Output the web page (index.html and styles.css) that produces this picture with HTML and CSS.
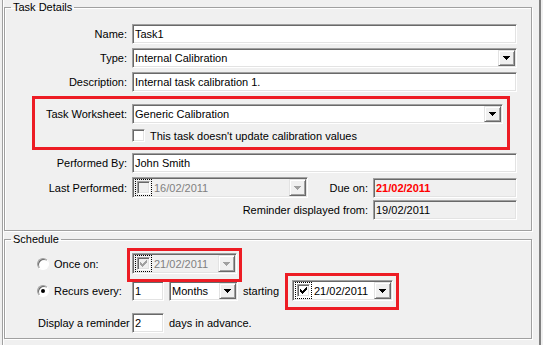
FILE: index.html
```html
<!DOCTYPE html>
<html>
<head>
  <title>Task Details</title>
  <link rel="stylesheet" href="styles.css">
</head>
<body>
  <div class="frame">
    <fieldset class="group details">
      <legend>Task Details</legend>
      <div class="row">
        <span class="lbl">Name:</span>
        <div class="field grow">Task1</div>
      </div>
      <div class="row">
        <span class="lbl">Type:</span>
        <div class="field combo grow">
          <span class="val">Internal Calibration</span>
          <span class="drop"><svg width="7" height="4" viewBox="0 0 7 4"><path d="M0 0h7v1H0zM1 1h5v1H1zM2 2h3v1H2zM3 3h1v1H3z"/></svg></span>
        </div>
      </div>
      <div class="row">
        <span class="lbl">Description:</span>
        <div class="field grow">Internal task calibration 1.</div>
      </div>

      <div class="highlight">
        <div class="row">
          <span class="lbl">Task Worksheet:</span>
          <div class="field combo grow">
            <span class="val">Generic Calibration</span>
            <span class="drop"><svg width="7" height="4" viewBox="0 0 7 4"><path d="M0 0h7v1H0zM1 1h5v1H1zM2 2h3v1H2zM3 3h1v1H3z"/></svg></span>
          </div>
        </div>
        <div class="check-row">
          <span class="lbl"></span>
          <span class="checkbox"></span>
          <span>This task doesn't update calibration values</span>
        </div>
      </div>

      <div class="row">
        <span class="lbl">Performed By:</span>
        <div class="field grow">John Smith</div>
      </div>
      <div class="row">
        <span class="lbl">Last Performed:</span>
        <div class="field dtp dtp-last disabled">
          <span class="checkbox focus"></span>
          <span class="date">16/02/2011</span>
          <span class="drop"><svg width="7" height="4" viewBox="0 0 7 4"><path d="M0 0h7v1H0zM1 1h5v1H1zM2 2h3v1H2zM3 3h1v1H3z"/></svg></span>
        </div>
        <div class="pair">
          <span class="pair-lbl">Due on:</span>
          <div class="field readonly due">21/02/2011</div>
        </div>
      </div>
      <div class="row reminder-row">
        <div class="pair">
          <span class="pair-lbl">Reminder displayed from:</span>
          <div class="field readonly">19/02/2011</div>
        </div>
      </div>
    </fieldset>

    <fieldset class="group schedule">
      <legend>Schedule</legend>
      <div class="row row-once">
        <span class="opt"><span class="radio"></span>Once on:</span>
        <div class="mark mark-once">
          <div class="field dtp dtp-once disabled">
            <span class="checkbox focus"><svg width="7" height="7" viewBox="0 0 7 7"><path d="M0 2h1v3H0zM1 3h1v3H1zM2 4h1v3H2zM3 3h1v3H3zM4 2h1v3H4zM5 1h1v3H5zM6 0h1v3H6z"/></svg></span>
            <span class="date">21/02/2011</span>
            <span class="drop"><svg width="7" height="4" viewBox="0 0 7 4"><path d="M0 0h7v1H0zM1 1h5v1H1zM2 2h3v1H2zM3 3h1v1H3z"/></svg></span>
          </div>
        </div>
      </div>
      <div class="row row-recur">
        <span class="opt"><span class="radio on"></span>Recurs every:</span>
        <div class="field num">1</div>
        <div class="field combo months">
          <span class="val">Months</span>
          <span class="drop"><svg width="7" height="4" viewBox="0 0 7 4"><path d="M0 0h7v1H0zM1 1h5v1H1zM2 2h3v1H2zM3 3h1v1H3z"/></svg></span>
        </div>
        <span class="starting">starting</span>
        <div class="mark mark-start">
          <div class="field dtp dtp-start">
            <span class="checkbox focus"><svg width="7" height="7" viewBox="0 0 7 7"><path d="M0 2h1v3H0zM1 3h1v3H1zM2 4h1v3H2zM3 3h1v3H3zM4 2h1v3H4zM5 1h1v3H5zM6 0h1v3H6z"/></svg></span>
            <span class="date">21/02/2011</span>
            <span class="drop"><svg width="7" height="4" viewBox="0 0 7 4"><path d="M0 0h7v1H0zM1 1h5v1H1zM2 2h3v1H2zM3 3h1v1H3z"/></svg></span>
          </div>
        </div>
      </div>
      <div class="row row-remind">
        <span class="opt plain">Display a reminder</span>
        <div class="field num">2</div>
        <span class="after">days in advance.</span>
      </div>
    </fieldset>
  </div>
</body>
</html>
```

FILE: styles.css
```css
body {
  margin: 0;
  background-color: #f0f0f0;
  font-family: "Liberation Sans", Arial, sans-serif;
  font-size: 11px;
  color: #000;
}

.frame {
  width: 528px;
  min-height: 100vh;
  margin-left: 2px;
  padding: 0 7px 0 1px;
  border-left: 1px solid #a0a0a0;
  border-right: 2px solid #808080;
  box-shadow: inset 1px 0 #fff;
}

/* group boxes */
.group {
  margin: 0;
  min-width: 0;
  border: 1px solid #a0a0a0;
  box-shadow: 1px 1px #fff, inset 1px 1px #fff;
}

.group legend {
  margin-left: 6px;
  padding: 0 2px;
  line-height: 14px;
}

.details {
  padding: 6px 14px 10px 0;
}

.schedule {
  margin-top: 1px;
  padding: 7px 14px 5px 0;
}

.row {
  display: flex;
  align-items: center;
  min-height: 20px;
}

.details > .row {
  margin-top: 4px;
}

.details > .reminder-row {
  margin-top: 2px;
}

.lbl {
  flex: none;
  width: 122px;
  margin-right: 5px;
  text-align: right;
}

/* red annotation round the worksheet rows */
.highlight {
  margin: 4px 7px -1px 27px;
  padding: 5px 4px 5px 0;
  border: 3px solid #ed1c24;
}

.highlight .lbl {
  width: 92px;
}

.check-row {
  display: flex;
  align-items: center;
  margin-top: 5px;
}

/* sunken edit boxes */
.field {
  box-sizing: border-box;
  height: 20px;
  display: flex;
  align-items: center;
  padding: 1px 1px 1px 2px;
  border: 1px solid;
  border-color: #a0a0a0 #fff #fff #a0a0a0;
  box-shadow: inset 1px 1px #696969, inset -1px -1px #e3e3e3;
  background-color: #fff;
  white-space: nowrap;
}

.grow {
  flex: 1;
}

.readonly {
  background-color: #f0f0f0;
}

.due {
  color: #f00;
  font-weight: bold;
}

.pair {
  margin-left: auto;
  display: flex;
  align-items: center;
}

.pair-lbl {
  margin-right: 5px;
}

.pair .field {
  width: 144px;
}

.combo .val {
  flex: 1;
}

.drop {
  box-sizing: border-box;
  flex: none;
  width: 17px;
  height: 100%;
  display: flex;
  align-items: center;
  justify-content: center;
  border: 1px solid;
  border-color: #e3e3e3 #696969 #696969 #e3e3e3;
  box-shadow: inset 1px 1px #fff, inset -1px -1px #a0a0a0;
  background-color: #f0f0f0;
}

.drop svg {
  fill: #000;
}

/* check boxes */
.checkbox {
  box-sizing: border-box;
  flex: none;
  width: 13px;
  height: 13px;
  display: flex;
  align-items: center;
  justify-content: center;
  border: 1px solid;
  border-color: #a0a0a0 #fff #fff #a0a0a0;
  box-shadow: inset 1px 1px #696969, inset -1px -1px #e3e3e3;
  background-color: #fff;
}

.check-row .checkbox {
  margin-right: 5px;
}

.checkbox.focus {
  outline: 1px dotted #000;
  outline-offset: 1px;
}

/* date pickers */
.dtp {
  height: 21px;
  padding-left: 1px;
}

.dtp .checkbox {
  margin-left: 3px;
  margin-right: 4px;
}

.dtp .date {
  flex: 1;
}

.dtp-last {
  width: 176px;
}

.dtp-once {
  width: 105px;
}

.dtp-start {
  width: 101px;
}

.disabled {
  background-color: #f0f0f0;
  color: #808080;
}

.disabled .checkbox {
  background-color: #f0f0f0;
}

.disabled svg {
  fill: #a0a0a0;
}

/* schedule */
.schedule > .row {
  margin-left: 32px;
}

.row-once {
  min-height: 21px;
}

.row-recur {
  margin-top: 6px;
  min-height: 21px;
}

.row-remind {
  margin-top: 12px;
}

.opt {
  flex: none;
  width: 95px;
  display: flex;
  align-items: center;
}

.opt.plain {
  padding-left: 1px;
  width: 94px;
}

.radio {
  box-sizing: border-box;
  width: 12px;
  height: 12px;
  margin-right: 5px;
  border-radius: 50%;
  border: 1px solid;
  border-color: #a0a0a0 #fff #fff #a0a0a0;
  box-shadow: inset 1px 1px #696969;
  background-color: #fff;
  display: flex;
  align-items: center;
  justify-content: center;
}

.radio.on::after {
  content: "";
  width: 4px;
  height: 4px;
  border-radius: 50%;
  background-color: #000;
}

.num {
  width: 32px;
}

.months {
  width: 69px;
  margin-left: 5px;
}

.starting {
  width: 49px;
  margin-left: 5px;
}

.after {
  margin-left: 5px;
}

.mark {
  position: relative;
}

.mark::after {
  content: "";
  position: absolute;
  border: 3px solid #ed1c24;
}

.mark-once::after {
  left: -5px;
  top: -5px;
  right: -5px;
  bottom: -8px;
}

.mark-start::after {
  left: -7px;
  top: -7px;
  right: -6px;
  bottom: -9px;
}
```
